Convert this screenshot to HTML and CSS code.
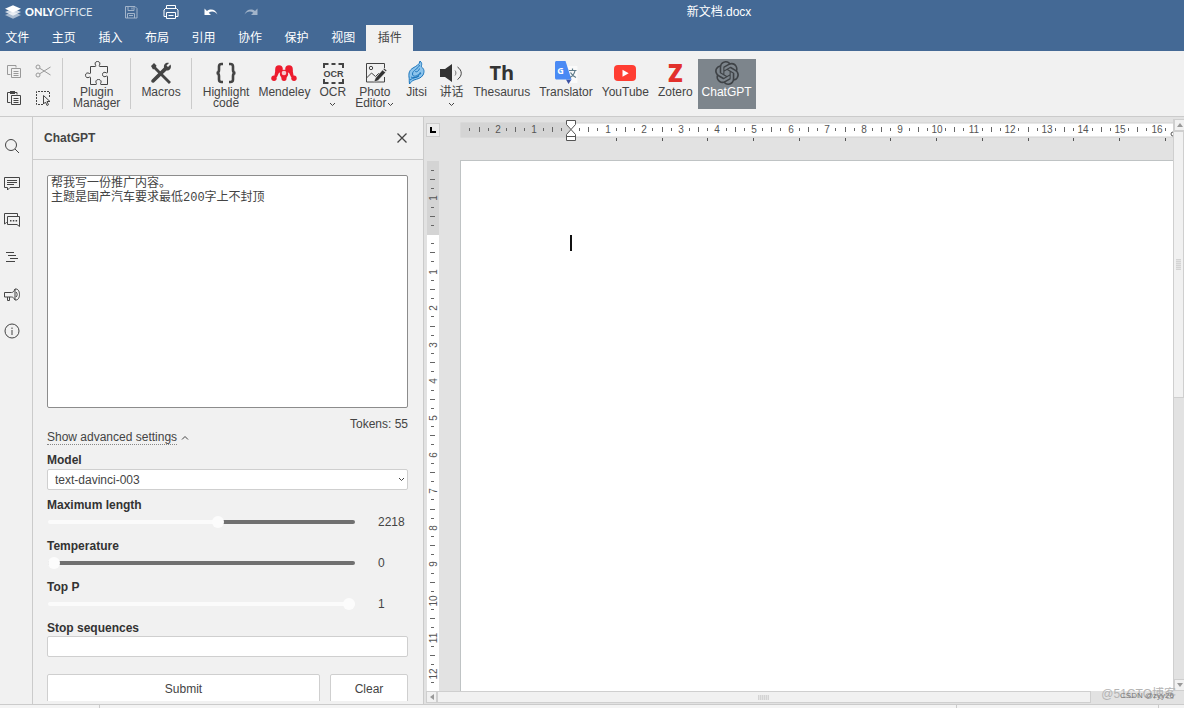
FILE: index.html
```html
<!DOCTYPE html>
<html lang="zh-CN">
<head>
<meta charset="utf-8">
<meta name="viewport" content="width=device-width, initial-scale=1">
<title>新文档.docx</title>
<link rel="stylesheet" href="styles.css">
</head>
<body>
<div class="app">
  <header class="header">
    <div class="header-top">
      <a class="brand" href="#">
        <svg class="brand-mark" viewBox="0 0 16 14" aria-hidden="true"><path d="M8 6.6 0 10l8 3.7L16 10z" fill="#fff" opacity=".55"/><path d="M8 3.6 0 7l8 3.7L16 7z" fill="#fff" opacity=".75"/><path d="M8 .2 0 3.8l8 3.6 8-3.6z" fill="#fff"/></svg>
        <span class="brand-name"><b>ONLY</b>OFFICE</span>
      </a>
      <div class="quick">
        <button class="quick-btn dim" aria-label="Save"><svg viewBox="0 0 16 16"><path d="M2.500 2.500h9.500l2 2v9.500h-11.500zM5 2.500v4h6v-4M9 3.500v2M4.500 14V9.500h7V14M6 11.500h4" fill="none" stroke="#fff"/></svg></button>
        <button class="quick-btn" aria-label="Print"><svg viewBox="0 0 16 16"><path d="M3.500 4.500v-3h9v3M3.500 12.500h-2.500v-6.500l1.500-1.500h11l1.500 1.500v6.500h-2.500M3.500 8.500h9v6h-9zM5.500 11.500h5" fill="none" stroke="#fff"/></svg></button>
        <button class="quick-btn" aria-label="Undo"><svg viewBox="0 0 16 16"><path d="M1.500 4.500v6.500H8L5.700 8.800C8.500 6.600 12 7.200 14.500 10.500 13 6 8 3.800 4 7z" fill="#fff"/></svg></button>
        <button class="quick-btn dim" aria-label="Redo"><svg viewBox="0 0 16 16"><path d="M14.500 4.500v6.500H8l2.300-2.200C7.500 6.600 4 7.200 1.500 10.500 3 6 8 3.800 12 7z" fill="#fff"/></svg></button>
      </div>
      <h1 class="doc-title">新文档.docx</h1>
    </div>
    <nav class="tabs">
      <a href="#">文件</a><a href="#">主页</a><a href="#">插入</a><a href="#">布局</a><a href="#">引用</a><a href="#">协作</a><a href="#">保护</a><a href="#">视图</a><a class="active" href="#">插件</a>
    </nav>
  </header>

  <div class="toolbar">
    <div class="clipboard">
      <button class="mini dim" aria-label="Copy"><svg viewBox="0 0 16 16"><path d="M4.500 11.500h-3v-9h8.500v2M5.500 5.500h9v9h-9zM7.500 8.500h5M7.500 10.500h5M7.500 12.500h5" fill="none" stroke="#444"/></svg></button>
      <button class="mini dim" aria-label="Cut"><svg viewBox="0 0 16 16"><g fill="none" stroke="#444"><circle cx="3" cy="4" r="2"/><circle cx="3" cy="12" r="2"/><path d="M4.700 5.200 15.500 12M4.700 10.800 15.500 4"/></g></svg></button>
      <button class="mini" aria-label="Paste"><svg viewBox="0 0 16 16"><path d="M4.500 12.500h-3v-10h9.500v2M5.500 5.500h9v9h-9zM7.500 8.500h5M7.500 10.500h5M7.500 12.500h5" fill="none" stroke="#444"/><path d="M4 1h5v3H4z" fill="#444"/></svg></button>
      <button class="mini" aria-label="Select all"><svg viewBox="0 0 16 16"><path d="M8 14.500H1.500v-13h13V7" fill="none" stroke="#444" stroke-dasharray="2 1"/><path d="M8.500 5.500v8.500l2-2 1.500 3.500 1.500-.8-1.500-3.200H15z" fill="#f1f1f1" stroke="#444"/></svg></button>
    </div>
    <div class="group">
      <button class="tool">
        <svg class="icon" viewBox="0 0 26 26"><path d="M6.500 6.500h4.800c.5 0 .7-.5.400-1C10.500 3.500 11 1.500 13.500 1.500s3 2 1.800 4c-.3.500-.1 1 .4 1h7.800v6c0 .5-.5.700-1 .4-2-1.200-4-.7-4 1.600s2 2.800 4 1.600c.5-.3 1-.1 1 .4v8h-6.500c-.5 0-.7-.5-.4-1 1.200-2 .4-4-2.100-4s-3.300 2-2.100 4c.3.500.1 1-.4 1H6.500v-7c0-.5-.5-.7-1-.4-2 1.200-4 .5-4-1.800s2-3 4-1.800c.5.300 1 .1 1-.4z" fill="none" stroke="#444"/></svg>
        <span class="label">Plugin<br>Manager</span></button>
    </div>
    <div class="group">
      <button class="tool">
        <svg class="icon" viewBox="0 0 26 26"><path d="M3 6l3-3 2.500 2.500-.5 1.500 15 15-2 2L6 9l-1 .5z" fill="#444"/><path d="M22.500 4.500 20 7l-1.500-1.500L21 3c-3-.8-5.500 1.500-5 4.500L3.500 20c-1 2 1 3.500 2.500 2.500L18.500 10.500c3.200.5 5.500-2.500 4-6z" fill="#444"/></svg>
        <span class="label">Macros</span></button>
    </div>
    <div class="group plugins">
      <button class="tool">
        <svg class="icon" viewBox="0 0 26 26"><path d="M10 4H8.500C6.500 4 6 5 6 6.500V10c0 1.800-.8 3-2.500 3 1.700 0 2.500 1.200 2.500 3v3.500C6 21 6.500 22 8.500 22H10M16 4h1.500C19.500 4 20 5 20 6.500V10c0 1.800.8 3 2.500 3-1.700 0-2.500 1.200-2.500 3v3.500c0 1.500-.5 2.500-2.500 2.500H16" fill="none" stroke="#444" stroke-width="2.600"/></svg>
        <span class="label">Highlight<br>code</span></button>
      <button class="tool">
        <svg class="icon" viewBox="0 0 26 26"><g fill="#ed1c2e"><circle cx="8" cy="9" r="3.800"/><circle cx="18" cy="9" r="3.800"/><circle cx="13" cy="14" r="4.200"/><circle cx="3" cy="18.300" r="2.700"/><circle cx="13" cy="18.300" r="2.700"/><circle cx="23" cy="18.300" r="2.700"/><path d="M4.500 9.500h5L6 17 3 18zM21.500 9.500h-5L20 17l3 1z"/></g><path d="M8 17.500l2.500 1.500M18 17.500 15.500 19" stroke="#f1f1f1" fill="none"/><circle cx="13" cy="13" r="2.300" fill="#f7c9cd"/></svg>
        <span class="label">Mendeley</span></button>
      <button class="tool">
        <svg class="icon" viewBox="0 0 26 26"><path d="M4 8V4h4.500M18.500 4H23v4M4 19v4h4.500M18.500 23H23v-4M11.500 4h4M11.500 23h4" fill="none" stroke="#444" stroke-width="2"/><text class="ocr" x="13.500" y="17">OCR</text></svg>
        <span class="label">OCR</span>
        <svg class="chev" viewBox="0 0 7 5"><path d="M1 1l2.500 2.500L6 1" fill="none" stroke="#444"/></svg></button>
      <button class="tool">
        <svg class="icon" viewBox="0 0 26 26"><path d="M22.500 8V3.500h-18v18.500h18V17M4.500 18l5-5 4 3.500 3-3 2 1" fill="none" stroke="#444"/><circle cx="9" cy="8" r="1.700" fill="none" stroke="#444"/><path d="M12 22l1.500-4 7-8 3 2.500-7.500 8zM21.200 9.200l1-1 2.600 2.300-1 1z" fill="#333" stroke="#f1f1f1" stroke-width=".4"/></svg>
        <span class="label">Photo<br>Editor<svg class="chev inline" viewBox="0 0 7 5"><path d="M1 1l2.500 2.500L6 1" fill="none" stroke="#444"/></svg></span></button>
      <button class="tool">
        <svg class="icon" viewBox="0 0 26 26"><path d="M17 1c3 2.500 1 4.500 1.500 6 3 2 3 5 1.500 8-2 3.500-6 4-9 5-2 .8-3 2-4.500 4-.5-3 0-4.500-.5-7-.5-4 .5-7 4-9C13 6 16.500 5 17 1z" fill="#8cc4ec" stroke="#1b75bc"/><path d="M16.500 5c-1 4-7 5-7 9s6 2 8-2M8 17c4 2 8-1 10-4M12 11c1 2 4 0 4.500-2.500M7 20c3-3 7-2 9-4" fill="none" stroke="#1b75bc"/></svg>
        <span class="label">Jitsi</span></button>
      <button class="tool">
        <svg class="icon" viewBox="0 0 26 26"><path d="M2 9h5l7-5v18l-7-5H2z" fill="#333"/><path d="M17 10.500c1.200 1.500 1.200 3.500 0 5" fill="none" stroke="#777"/><path d="M19.500 7c5 3.500 5 9 0 12.500" fill="none" stroke="#444"/></svg>
        <span class="label">讲话</span>
        <svg class="chev" viewBox="0 0 7 5"><path d="M1 1l2.500 2.500L6 1" fill="none" stroke="#444"/></svg></button>
      <button class="tool">
        <span class="icon glyph">Th</span>
        <span class="label">Thesaurus</span></button>
      <button class="tool">
        <svg class="icon" viewBox="0 0 26 26"><path d="M10 6h13.500c.6 0 1 .4 1 1v15c0 .6-.4 1-1 1h-8z" fill="#fafafa"/><path d="M13 19.500l2.500 4.500 3-4.500z" fill="#3b51a3"/><path d="M3.500 1h9l6 18.500h-15C2.700 19.500 2 18.800 2 18V2.500C2 1.700 2.700 1 3.500 1z" fill="#4a8af4"/><text class="gee" x="7.500" y="14">G</text><path d="M16 10.500h7.500M19.500 8.500v2M22 10.500c-.5 3-2.500 5.500-5 7M17.500 12.500c1 2 3.500 4 5.500 5" fill="none" stroke="#607d8b" stroke-width="1.200"/></svg>
        <span class="label">Translator</span></button>
      <button class="tool">
        <svg class="icon" viewBox="0 0 26 26"><rect x="2" y="5" width="22" height="16" rx="4" fill="#ff3d32"/><path d="M10.500 9.700v7l6.200-3.500z" fill="#fff"/></svg>
        <span class="label">YouTube</span></button>
      <button class="tool">
        <span class="icon glyph zed">Z</span>
        <span class="label">Zotero</span></button>
      <button class="tool active">
        <svg class="icon" viewBox="0 0 24 24"><path fill="#3e4246" d="M22.2819 9.8211a5.9847 5.9847 0 0 0-.5157-4.9108 6.0462 6.0462 0 0 0-6.5098-2.9A6.0651 6.0651 0 0 0 4.9807 4.1818a5.9847 5.9847 0 0 0-3.9977 2.9 6.0462 6.0462 0 0 0 .7427 7.0966 5.98 5.98 0 0 0 .511 4.9107 6.051 6.051 0 0 0 6.5146 2.9001A5.9847 5.9847 0 0 0 13.2599 24a6.0557 6.0557 0 0 0 5.7718-4.2058 5.9894 5.9894 0 0 0 3.9977-2.9001 6.0557 6.0557 0 0 0-.7475-7.0729zm-9.022 12.6081a4.4755 4.4755 0 0 1-2.8764-1.0408l.1419-.0804 4.7783-2.7582a.7948.7948 0 0 0 .3927-.6813v-6.7369l2.02 1.1686a.071.071 0 0 1 .038.052v5.5826a4.504 4.504 0 0 1-4.4945 4.4944zm-9.6607-4.1254a4.4708 4.4708 0 0 1-.5346-3.0137l.142.0852 4.783 2.7582a.7712.7712 0 0 0 .7806 0l5.8428-3.3685v2.3324a.0804.0804 0 0 1-.0332.0615L9.74 19.9502a4.4992 4.4992 0 0 1-6.1408-1.6464zM2.3408 7.8956a4.485 4.485 0 0 1 2.3655-1.9728V11.6a.7664.7664 0 0 0 .3879.6765l5.8144 3.3543-2.0201 1.1685a.0757.0757 0 0 1-.071 0l-4.8303-2.7865A4.504 4.504 0 0 1 2.3408 7.872zm16.5963 3.8558L13.1038 8.364 15.1192 7.2a.0757.0757 0 0 1 .071 0l4.8303 2.7913a4.4944 4.4944 0 0 1-.6765 8.1042v-5.6772a.79.79 0 0 0-.407-.667zm2.0107-3.0231l-.142-.0852-4.7735-2.7818a.7759.7759 0 0 0-.7854 0L9.409 9.2297V6.8974a.0662.0662 0 0 1 .0284-.0615l4.8303-2.7866a4.4992 4.4992 0 0 1 6.6802 4.66zM8.3065 12.863l-2.02-1.1638a.0804.0804 0 0 1-.038-.0567V6.0742a4.4992 4.4992 0 0 1 7.3757-3.4537l-.142.0805L8.704 5.459a.7948.7948 0 0 0-.3927.6813zm1.0976-2.3654l2.602-1.4998 2.6069 1.4998v2.9994l-2.5974 1.4997-2.6067-1.4997Z"/></svg>
        <span class="label">ChatGPT</span></button>
    </div>
  </div>

  <main class="workspace">
    <nav class="rail">
      <button aria-label="Search"><svg viewBox="0 0 16 16"><g fill="none" stroke="#444"><circle cx="7" cy="7" r="5.500"/><path d="M11 11l4 4"/></g></svg></button>
      <button aria-label="Comments"><svg viewBox="0 0 16 16"><path d="M.5 2.500h15v10H6l-2.500 2.500v-2.500h-3zM3 5.500h10M3 7.500h10M3 9.500h7" fill="none" stroke="#444"/></svg></button>
      <button aria-label="Chat"><svg viewBox="0 0 16 16"><path d="M3.500 10.500h-1L.5 12V1.500h13v3M3.500 4.500h12v10l-2.500-2h-9.500z" fill="none" stroke="#444"/><path d="M6 8h1.500v1.500H6zM8.800 8h1.500v1.500H8.800zM11.600 8h1.500v1.500h-1.500z" fill="#444"/></svg></button>
      <button aria-label="Headings"><svg viewBox="0 0 16 16"><path d="M2 3.500h8M4 6.500h8M6 9.500h8M2 12.500h9" fill="none" stroke="#444"/></svg></button>
      <button aria-label="Feedback"><svg viewBox="0 0 16 16"><path d="M.5 6.500h7c1.500 0 2.500-1 3.500-3.500v11c-1-2-2-3-3.500-3h-7zM3.500 11v3.500h2V11M11 3c3.500-.5 4.500 3 4.500 5.500s-1 6-4.500 5.500M12 6c1.500 1.500 1.500 3.500 0 5" fill="none" stroke="#444"/></svg></button>
      <button aria-label="About"><svg viewBox="0 0 16 16"><circle cx="8" cy="8" r="7" fill="none" stroke="#444"/><path d="M8 7v5M8 4.500V6" stroke="#444" fill="none"/></svg></button>
    </nav>

    <aside class="panel">
      <div class="panel-head">
        <h2>ChatGPT</h2>
        <button class="close" aria-label="Close"><svg viewBox="0 0 12 12"><path d="M1.500 1.500l9 9M10.500 1.500l-9 9" stroke="#444" stroke-width="1.300" fill="none"/></svg></button>
      </div>
      <form class="panel-body">
        <textarea class="prompt" aria-label="Prompt" spellcheck="false">帮我写一份推广内容。
主题是国产汽车要求最低200字上不封顶</textarea>
        <p class="tokens">Tokens: 55</p>
        <button type="button" class="advanced"><span>Show advanced settings</span><svg viewBox="0 0 8 6"><path d="M1 4.500 4 1.500l3 3" fill="none" stroke="#444"/></svg></button>
        <label for="model">Model</label>
        <div class="select">
          <select id="model"><option>text-davinci-003</option></select>
          <svg viewBox="0 0 7 5"><path d="M1 1l2.500 2.500L6 1" fill="none" stroke="#444"/></svg>
        </div>
        <label for="len">Maximum length</label>
        <div class="slider"><input type="range" id="len" min="0" max="4000" value="2218" style="--fill:55%"><output for="len">2218</output></div>
        <label for="temp">Temperature</label>
        <div class="slider"><input type="range" id="temp" min="0" max="1" value="0" style="--fill:0%"><output for="temp">0</output></div>
        <label for="topp">Top P</label>
        <div class="slider"><input type="range" id="topp" min="0" max="1" value="1" style="--fill:100%"><output for="topp">1</output></div>
        <label for="stop">Stop sequences</label>
        <input class="text" type="text" id="stop">
        <div class="actions"><button type="button">Submit</button><button type="button">Clear</button></div>
      </form>
    </aside>

    <section class="editor">
      <div class="corner"><button class="tab-kind" aria-label="Left tab"><svg viewBox="0 0 8 8"><path d="M2 1v5h5" fill="none" stroke="#000" stroke-width="2"/></svg></button></div>
      <svg class="ruler-h" id="ruler-h" aria-hidden="true"></svg>
      <svg class="ruler-v" id="ruler-v" aria-hidden="true"></svg>
      <div class="page"><span class="cursor"></span></div>
      <div class="scroll-v">
        <button aria-label="Scroll up"><svg viewBox="0 0 6 4"><path d="M0 4l3-4 3 4z" fill="#999"/></svg></button>
        <div class="thumb"><i></i></div>
        <div class="track"></div>
        <button aria-label="Scroll down"><svg viewBox="0 0 6 4"><path d="M0 0l3 4 3-4z" fill="#999"/></svg></button>
      </div>
      <div class="scroll-h">
        <button aria-label="Scroll left"><svg viewBox="0 0 4 6"><path d="M4 0 0 3l4 3z" fill="#999"/></svg></button>
        <div class="thumb"><i></i></div>
        <div class="track"></div>
      </div>
    </section>
  </main>
  <footer class="status"><span></span><span></span><span></span><span></span></footer>
  <div class="mark mark-large">@51CTO博客</div>
  <div class="mark mark-small">CSDN @zyy26</div>
</div>
<script src="ruler.js"></script>
</body>
</html>
```
FILE: styles.css
```css
* { box-sizing: border-box; }

body {
  margin: 0;
  color: #444;
  background: #f1f1f1;
  font: 12px/14px "Liberation Sans", "Noto Sans CJK SC", sans-serif;
}

button, input, select, textarea { font: inherit; color: inherit; }
button { border: 0; padding: 0; background: none; }
a { color: inherit; text-decoration: none; }
h1, h2, p { margin: 0; font-size: 12px; }
svg { display: block; overflow: hidden; }

.app {
  position: relative;
  display: flex;
  flex-direction: column;
  height: 100vh;
  overflow: hidden;
}

/* Header */
.header { background: #446995; color: #fff; }
.header-top { display: flex; align-items: center; height: 24px; padding-right: 16px; }
.brand { display: flex; align-items: center; gap: 4px; width: 111px; padding-left: 5px; }
.brand-mark { width: 16px; height: 14px; }
.brand-name { font: 11px/14px Lato, sans-serif; color: #dde5ee; }
.brand-name b { color: #fff; font-weight: 900; }
.quick { display: flex; gap: 1px; }
.quick-btn { display: grid; place-items: center; width: 39px; height: 22px; }
.quick-btn svg { width: 16px; height: 16px; }
.dim { opacity: .5; }
.doc-title { flex: 1; text-align: center; font-weight: 400; }
.tabs {
  display: grid;
  grid-template-columns: repeat(9, 1fr);
  width: 419px;
  margin: 1px 0 0 -6px;
}
.tabs a { line-height: 26px; text-align: center; }
.tabs .active { background: #f1f1f1; color: #444; }

/* Toolbar */
.toolbar {
  display: flex;
  height: 66px;
  padding: 7px 0;
  border-bottom: 1px solid #cbcbcb;
}
.clipboard { display: grid; grid-template-columns: 28px 29px; align-content: space-between; padding: 5px 5px 3px 0; }
.mini { display: grid; place-items: center; }
.mini svg { width: 16px; height: 16px; }
.group { display: flex; padding: 0 5px; border-left: 1px solid #cbcbcb; }
.tool {
  display: flex;
  flex-direction: column;
  align-items: center;
  height: 50px;
  padding: 1px 5px 0;
  line-height: 11px;
  margin-top: 1px;
}
.icon { flex: none; width: 26px; height: 26px; margin-bottom: 1px; }
.label { white-space: nowrap; text-align: center; }
.plugins { gap: 1px; padding-left: 7px; }
.plugins .tool { padding: 1px 4px 0; }
.chev { width: 7px; height: 5px; margin-top: 4px; }
.chev.inline { display: inline-block; margin: 0 0 0 1px; vertical-align: 0; }
.glyph { font: 700 20px/26px "Open Sans", sans-serif; color: #333; text-align: center; }
.zed { color: #e2312c; font-size: 24px; font-weight: 800; }
.ocr { font: 700 9px "Liberation Sans", sans-serif; fill: #444; text-anchor: middle; }
.gee { font: 700 9px "Open Sans", sans-serif; fill: #fff; text-anchor: middle; }
.tool.active { background: #7d858c; color: #fff; }
.tool.active .icon { width: 24px; height: 24px; margin: 1px 0 2px; }

/* Workspace */
.workspace { display: flex; flex: 1; min-height: 0; }
.rail {
  display: flex;
  flex-direction: column;
  align-items: center;
  width: 33px;
  padding: 10px 8px 0 0;
  border-right: 1px solid #cbcbcb;
}
.rail button { display: grid; place-items: center; width: 24px; height: 37px; }
.rail svg { width: 16px; height: 16px; }

.panel {
  display: flex;
  flex-direction: column;
  width: 391px;
  padding-bottom: 3px;
  border-right: 1px solid #cbcbcb;
}
.panel-head {
  display: flex;
  align-items: center;
  justify-content: space-between;
  flex: none;
  height: 43px;
  padding: 0 15px 0 11px;
  border-bottom: 1px solid #cbcbcb;
}
.close svg { width: 12px; height: 12px; }
.panel-body {
  display: flex;
  flex-direction: column;
  flex: 1;
  min-height: 0;
  padding: 15px 15px 0 14px;
  overflow: hidden;
}
.panel-body > * { flex: none; }
.prompt {
  height: 233px;
  padding: 1px 3px;
  border: 1px solid #8c8c8c;
  border-radius: 2px;
  outline: 0;
  resize: none;
  background: #fff;
  font: 12px/14px "Liberation Mono", "Noto Sans CJK SC", monospace;
}
.tokens { margin-top: 9px; text-align: right; font-weight: 400; }
.advanced { display: flex; align-items: center; align-self: flex-start; gap: 4px; margin-bottom: 8px; }
.advanced span { line-height: 13px; border-bottom: 1px dotted #888; }
.advanced svg { width: 8px; height: 6px; }
.panel-body label { color: #333; font-weight: 700; }
.select { position: relative; margin: 2px 0 8px; }
.select select {
  display: block;
  width: 100%;
  height: 21px;
  padding: 0 7px;
  border: 1px solid #cfcfcf;
  border-radius: 2px;
  background: #fff;
  appearance: none;
}
.select svg { position: absolute; right: 3px; top: 8px; width: 7px; height: 5px; }
.slider {
  display: grid;
  grid-template-columns: 1fr 30px;
  align-items: center;
  gap: 23px;
  height: 20px;
  padding-left: 1px;
  margin-bottom: 7px;
}
.slider input { width: 100%; height: 12px; margin: 0; background: none; appearance: none; }
.slider input::-webkit-slider-runnable-track {
  height: 4px;
  border-radius: 2px;
  background: linear-gradient(to right, #fbfbfb var(--fill), #707070 var(--fill));
}
.slider input::-webkit-slider-thumb {
  width: 12px;
  height: 12px;
  margin-top: -4px;
  border-radius: 50%;
  background: #fcfcfc;
  appearance: none;
}
.text { height: 21px; margin-top: 1px; padding: 0 7px; border: 1px solid #cfcfcf; border-radius: 2px; background: #fff; }
.actions { display: grid; grid-template-columns: 7fr 2fr; gap: 10px; margin-top: 17px; }
.actions button { height: 30px; border: 1px solid #cfcfcf; border-radius: 2px; background: #fff; }

/* Editor */
.editor {
  display: grid;
  grid-template: 43px 1fr 13px / 36px 1fr 11px;
  flex: 1;
  min-width: 0;
  background: #e2e2e2;
}
.corner { padding: 6px 0 0 2px; }
.tab-kind { display: grid; place-items: center; width: 14px; height: 14px; border: 1px solid #ccc; background: #ececec; }
.tab-kind svg { width: 8px; height: 8px; }
.ruler-h, .ruler-v { width: 100%; height: 100%; }
.ruler-h { grid-area: 1 / 2; }
.ruler-v { grid-area: 2 / 1; }
.ruler-num { font: 10px "Liberation Sans", sans-serif; fill: #555; text-anchor: middle; }
.page { grid-area: 2 / 2; padding: 74px 0 0 109px; border: 1px solid #bfc3c4; border-width: 1px 0 0 1px; background: #fff; }
.cursor { display: block; width: 2px; height: 16px; background: #111; }
.scroll-v {
  grid-area: 1 / 3 / 3 / 4;
  display: flex;
  flex-direction: column;
  margin-top: 2px;
  border-left: 1px solid #cfcfcf;
}
.scroll-v button, .scroll-h button { display: grid; place-items: center; flex: none; width: 11px; height: 12px; border: 1px solid #cfcfcf; background: #f1f1f1; }
.scroll-v button svg { width: 6px; height: 4px; }
.scroll-h button svg { width: 4px; height: 6px; }
.thumb { display: grid; place-items: center; border: 1px solid #cfcfcf; background: #f1f1f1; }
.scroll-v .thumb { flex: 485; border-left: 0; }
.scroll-v .track { flex: 515; }
.scroll-v i { width: 5px; height: 11px; background: repeating-linear-gradient(#d4d4d4 0 1px, #e4e4e4 1px 2px); }
.scroll-h { grid-area: 3 / 1 / 4 / 4; display: flex; padding: 0 11px 1px 2px; }
.scroll-h .thumb { flex: 888; }
.scroll-h .track { flex: 112; }
.scroll-h i { width: 11px; height: 5px; background: repeating-linear-gradient(to right, #d4d4d4 0 1px, #e4e4e4 1px 2px); }

.status { display: grid; grid-template-columns: 99px 856fr 202fr 26px; flex: none; height: 4px; border-top: 1px solid #cbcbcb; background: #f4f4f4; }
.status span + span { border-left: 1px solid #cbcbcb; }

/* Watermarks */
.mark { position: absolute; white-space: nowrap; pointer-events: none; }
.mark-large { right: 8px; bottom: 6px; font-size: 12px; line-height: 16px; color: #b4b4b4; }
.mark-small { right: 10px; bottom: 6px; font-size: 8px; line-height: 12px; color: #777; }
```
FILE: ruler.js
```js
const NS = 'http://www.w3.org/2000/svg';
const CM = 36.6;

function add(svg, name, attrs, text) {
  const el = document.createElementNS(NS, name);
  for (const key in attrs) el.setAttribute(key, attrs[key]);
  if (text !== undefined) el.textContent = text;
  svg.appendChild(el);
}

// Calls back for each quarter of a centimetre up to a distance in pixels.
function quarters(from, length, draw) {
  for (let q = from * 4; q * CM / 4 <= length; q++) {
    if (q !== 0) draw(q, Math.round(q * CM / 4));
  }
}

function drawHorizontal() {
  const h = document.getElementById('ruler-h');
  const zero = 111;
  const length = h.getBoundingClientRect().width - zero - 6;
  h.replaceChildren();
  add(h, 'rect', { x: 1, y: 6, width: '100%', height: 14, fill: '#fff', stroke: '#d0d0d0' });
  add(h, 'rect', { x: 1, y: 6, width: zero - 1, height: 14, fill: '#d4d4d4' });
  quarters(-2.75, length, (q, d) => {
    const x = zero + d;
    if (q % 4 === 0) {
      add(h, 'text', { x, y: 16, class: 'ruler-num' }, Math.abs(q / 4));
    } else {
      const len = q % 2 === 0 ? 5 : 3;
      add(h, 'rect', { x: x - 1, y: len === 5 ? 10 : 11, width: 1, height: len, fill: '#666' });
    }
  });
  for (let d = CM * 1.25; d < length; d += CM * 1.25) {
    add(h, 'rect', { x: zero + Math.round(d) - 1, y: 21, width: 1, height: 3, fill: '#555' });
  }
  add(h, 'path', {
    d: 'M106.500 3.500h9v4l-4.500 5 4.500 5v6h-9v-6l4.500-5-4.500-5zM106.500 19.500h9',
    fill: '#fff', stroke: '#555'
  });
  add(h, 'circle', { cx: length + zero + 6, cy: 17, r: 2, fill: '#fff', stroke: '#555' });
}

function drawVertical() {
  const v = document.getElementById('ruler-v');
  const zero = 75;
  const length = v.getBoundingClientRect().height - zero - 6;
  v.replaceChildren();
  add(v, 'rect', { x: 3, y: 1, width: 12, height: '100%', fill: '#fff' });
  add(v, 'rect', { x: 3, y: 1, width: 12, height: zero - 1, fill: '#d4d4d4' });
  quarters(-1.75, length, (q, d) => {
    const y = zero + d;
    if (q % 4 === 0) {
      add(v, 'text', { x: 0, y: 0, transform: `translate(13 ${y}) rotate(-90)`, class: 'ruler-num' }, Math.abs(q / 4));
    } else {
      const len = q % 2 === 0 ? 5 : 3;
      add(v, 'rect', { x: len === 5 ? 6 : 7, y: y - 1, width: len, height: 1, fill: '#666' });
    }
  });
}

function draw() {
  drawHorizontal();
  drawVertical();
}

draw();
window.addEventListener('resize', draw);
```
